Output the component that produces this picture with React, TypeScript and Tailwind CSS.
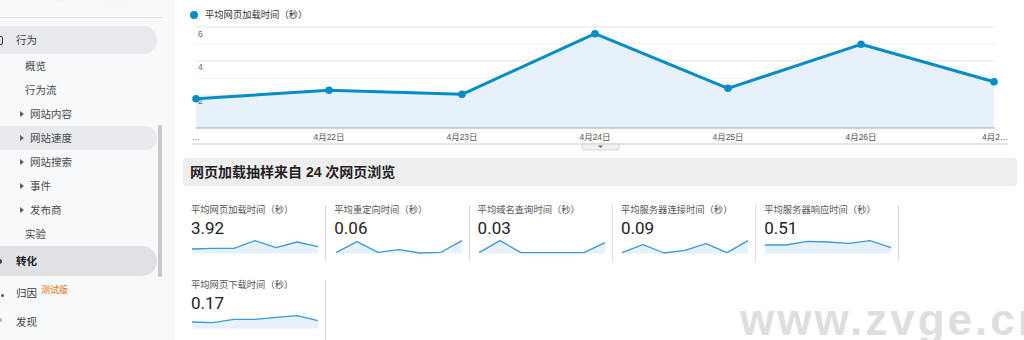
import React from "react";

// 侧边栏条目
function NavSub({ label, arrow, active }: { label: string; arrow?: boolean; active?: boolean }) {
  return (
    <div
      className={`h-[24px] w-[157px] flex items-center rounded-r-full ${active ? "bg-[#e8eaed]" : ""} ${
        arrow ? "pl-[20px]" : "pl-[25px]"
      }`}
    >
      {arrow && <span className="w-0 h-0 border-y-[3px] border-y-transparent border-l-[4px] border-l-[#5f6368]" />}
      <span className={`${arrow ? "ml-[6px]" : ""} text-[10.5px] leading-[12px] text-[#4a4a4a]`}>{label}</span>
    </div>
  );
}

function Spark({ ys }: { ys: number[] }) {
  const line = ys.map((y, i) => `${i * 21},${y}`).join(" ");
  return (
    <svg width={126} height={15} className="ml-[1.3px] overflow-visible block">
      <polygon points={`0,14.5 ${line} 126,14.5`} fill="#e6f1fb" />
      <polyline points={line} fill="none" stroke="#3d9ad6" strokeWidth={1.3} strokeLinejoin="round" />
    </svg>
  );
}

function Metric({ label, value, ys, tall }: { label: string; value: string; ys: number[]; tall?: boolean }) {
  return (
    <div className={`${tall ? "h-[60px]" : "h-[56px]"} border-r border-[#dddddd] pl-[8px] flex flex-col`}>
      <div className="h-[11px] text-[9.3px] leading-[11px] text-[#555555] whitespace-nowrap">{label}</div>
      <div className="mt-[2px] h-[21px] text-[17px] leading-[21px] text-[#222222] font-[family-name:Roboto,'Noto_Sans_CJK_SC',sans-serif]">
        {value}
      </div>
      <Spark ys={ys} />
    </div>
  );
}

const chartPts: [number, number][] = [
  [21, 74.7],
  [154, 66.3],
  [287, 70.3],
  [420, 9.7],
  [553, 64.3],
  [686, 20.3],
  [819, 57.7],
];

function Chart() {
  const line = chartPts.map((p) => p.join(",")).join(" ");
  const grid = [
    { y: 3, c: "#e6e6e6" },
    { y: 20, c: "#f2f2f2" },
    { y: 37, c: "#e6e6e6" },
    { y: 54, c: "#f2f2f2" },
    { y: 71, c: "#e6e6e6" },
    { y: 88, c: "#f2f2f2" },
  ];
  const days = ["4月22日", "4月23日", "4月24日", "4月25日", "4月26日"];
  return (
    <svg width={849} height={130} className="block">
      {grid.map((g) => (
        <line key={g.y} x1={21} x2={820} y1={g.y} y2={g.y} stroke={g.c} strokeWidth={1} />
      ))}
      <polygon points={`21,104 ${line} 819,104`} fill="#e6f1fb" />
      <line x1={21} x2={820} y1={104} y2={104} stroke="#aaaaaa" strokeWidth={1.2} />
      <text x={23} y={12.5} fontSize={8.5} fill="#666666">6</text>
      <text x={23} y={46} fontSize={8.5} fill="#666666">4</text>
      <text x={23} y={79.5} fontSize={8.5} fill="#666666">2</text>
      <polyline points={line} fill="none" stroke="#058dc7" strokeWidth={3} strokeLinejoin="round" />
      {chartPts.map(([x, y]) => (
        <circle key={x} cx={x} cy={y} r={3.8} fill="#058dc7" />
      ))}
      <text x={21} y={116.3} fontSize={8.5} fill="#777777" textAnchor="middle">…</text>
      {days.map((d, i) => (
        <text key={d} x={154 + i * 133} y={116.3} fontSize={8.5} fill="#555555" textAnchor="middle">
          {d}
        </text>
      ))}
      <text x={807} y={116.3} fontSize={8.5} fill="#555555">4月2…</text>
      <line x1={17} x2={833} y1={120} y2={120} stroke="#cccccc" strokeWidth={1} />
      <path d="M407,120 H444 V124 Q444,126 442,126 H409 Q407,126 407,124 Z" fill="#f1f1f1" stroke="#cccccc" strokeWidth={0.8} />
      <path d="M423,121.5 H428 L425.5,124 Z" fill="#666666" />
    </svg>
  );
}

export default function App() {
  return (
    <div className="relative flex w-[1024px] h-[340px] overflow-hidden bg-white font-[family-name:'Liberation_Sans','Noto_Sans_CJK_SC',sans-serif]">
      {/* 侧边栏 */}
      <aside className="relative w-[175px] shrink-0 bg-[#f8f9fa] flex flex-col">
        <div className="h-[18px] w-[163px] border-b border-[#e0e0e0] overflow-hidden">
          <div className="-mt-[11px] pl-[20px] text-[10.5px] leading-[12px] text-[#c4c4c4] whitespace-nowrap">
            所有网站数据 · 主视图
          </div>
        </div>
        <div className="mt-[8px] h-[28px] w-[157px] rounded-r-full bg-[#e8eaed] flex items-center">
          <span className="-ml-[8px] w-[11px] h-[9px] border-[1.5px] border-[#3c4043] rounded-[2px]" />
          <span className="ml-[13px] text-[10.5px] leading-[12px] text-[#3c4043]">行为</span>
        </div>
        <NavSub label="概览" />
        <NavSub label="行为流" />
        <NavSub label="网站内容" arrow />
        <NavSub label="网站速度" arrow active />
        <NavSub label="网站搜索" arrow />
        <NavSub label="事件" arrow />
        <NavSub label="发布商" arrow />
        <NavSub label="实验" />
        <div className="h-[30px] w-[157px] rounded-r-full bg-[#dfe1e5] flex items-center">
          <span className="-ml-[6px] w-[8px] h-[5px] rounded-full bg-[#3c4043]" />
          <span className="ml-[14px] text-[10.5px] leading-[12px] font-bold text-[#202124]">转化</span>
        </div>
        <div className="h-[34px] flex items-center">
          <span className="ml-[1px] mt-[5px] w-[3px] h-[3px] rounded-full bg-[#555555]" />
          <span className="ml-[12px] text-[10.5px] leading-[12px] text-[#3c4043]">归因</span>
          <span className="ml-[4px] -mt-[6px] text-[9px] leading-[10px] text-[#e8710a]">测试版</span>
        </div>
        <div className="h-[24px] flex items-center">
          <span className="-ml-[1px] -mt-[4px] w-[3px] h-[4px] rounded-full bg-[#bbbbbb]" />
          <span className="ml-[14px] text-[10.5px] leading-[12px] text-[#3c4043]">发现</span>
        </div>
        {/* 滚动条 */}
        <div className="absolute left-[158px] top-[125px] w-[4px] h-[152px] rounded-full bg-[#c8c8c8]" />
      </aside>

      {/* 主区域 */}
      <main className="flex-1 flex flex-col">
        <div className="h-[24px] pt-[8px] pl-[15px] flex items-start">
          <div className="h-[14px] flex items-center">
            <span className="w-[8px] h-[8px] rounded-full bg-[#058dc7]" />
            <span className="ml-[7px] text-[9.3px] leading-[14px] text-[#333333]">平均网页加载时间（秒）</span>
          </div>
        </div>
        <Chart />
        <div className="pl-[8px] pr-[7px]">
          <div className="mt-[6px] h-[28px] rounded-[4px] bg-[#eeeeee] flex items-center pl-[7px]">
            <span className="text-[14px] leading-[16px] font-bold text-[#222222]">网页加载抽样来自 24 次网页浏览</span>
          </div>
          <div className="mt-[19px] grid grid-cols-[repeat(5,143.3px)] gap-y-[19px]">
            <Metric label="平均网页加载时间（秒）" value="3.92" ys={[10, 9.3, 9.3, 1.6, 8.6, 3, 7.6]} />
            <Metric label="平均重定向时间（秒）" value="0.06" ys={[13.6, 2.6, 13.3, 10.6, 14, 13.3, 1.6]} />
            <Metric label="平均域名查询时间（秒）" value="0.03" ys={[13.6, 1.6, 13.6, 13.6, 13.6, 13.6, 3.6]} />
            <Metric label="平均服务器连接时间（秒）" value="0.09" ys={[13.6, 5.6, 14, 11.3, 4.6, 13.6, 1.6]} />
            <Metric label="平均服务器响应时间（秒）" value="0.51" ys={[6, 6, 2.3, 3, 4.3, 1.6, 8.6]} />
            <Metric label="平均网页下载时间（秒）" value="0.17" ys={[8, 8.6, 5.3, 5.3, 3.3, 1.6, 6.6]} tall />
          </div>
        </div>
      </main>

      {/* 水印 */}
      <div className="absolute left-[740px] top-[298px] text-[44px] leading-none font-bold tracking-[3px] text-[#dedede] whitespace-nowrap font-[family-name:'Liberation_Sans',sans-serif]">
        www.zvge.cn
      </div>
    </div>
  );
}
